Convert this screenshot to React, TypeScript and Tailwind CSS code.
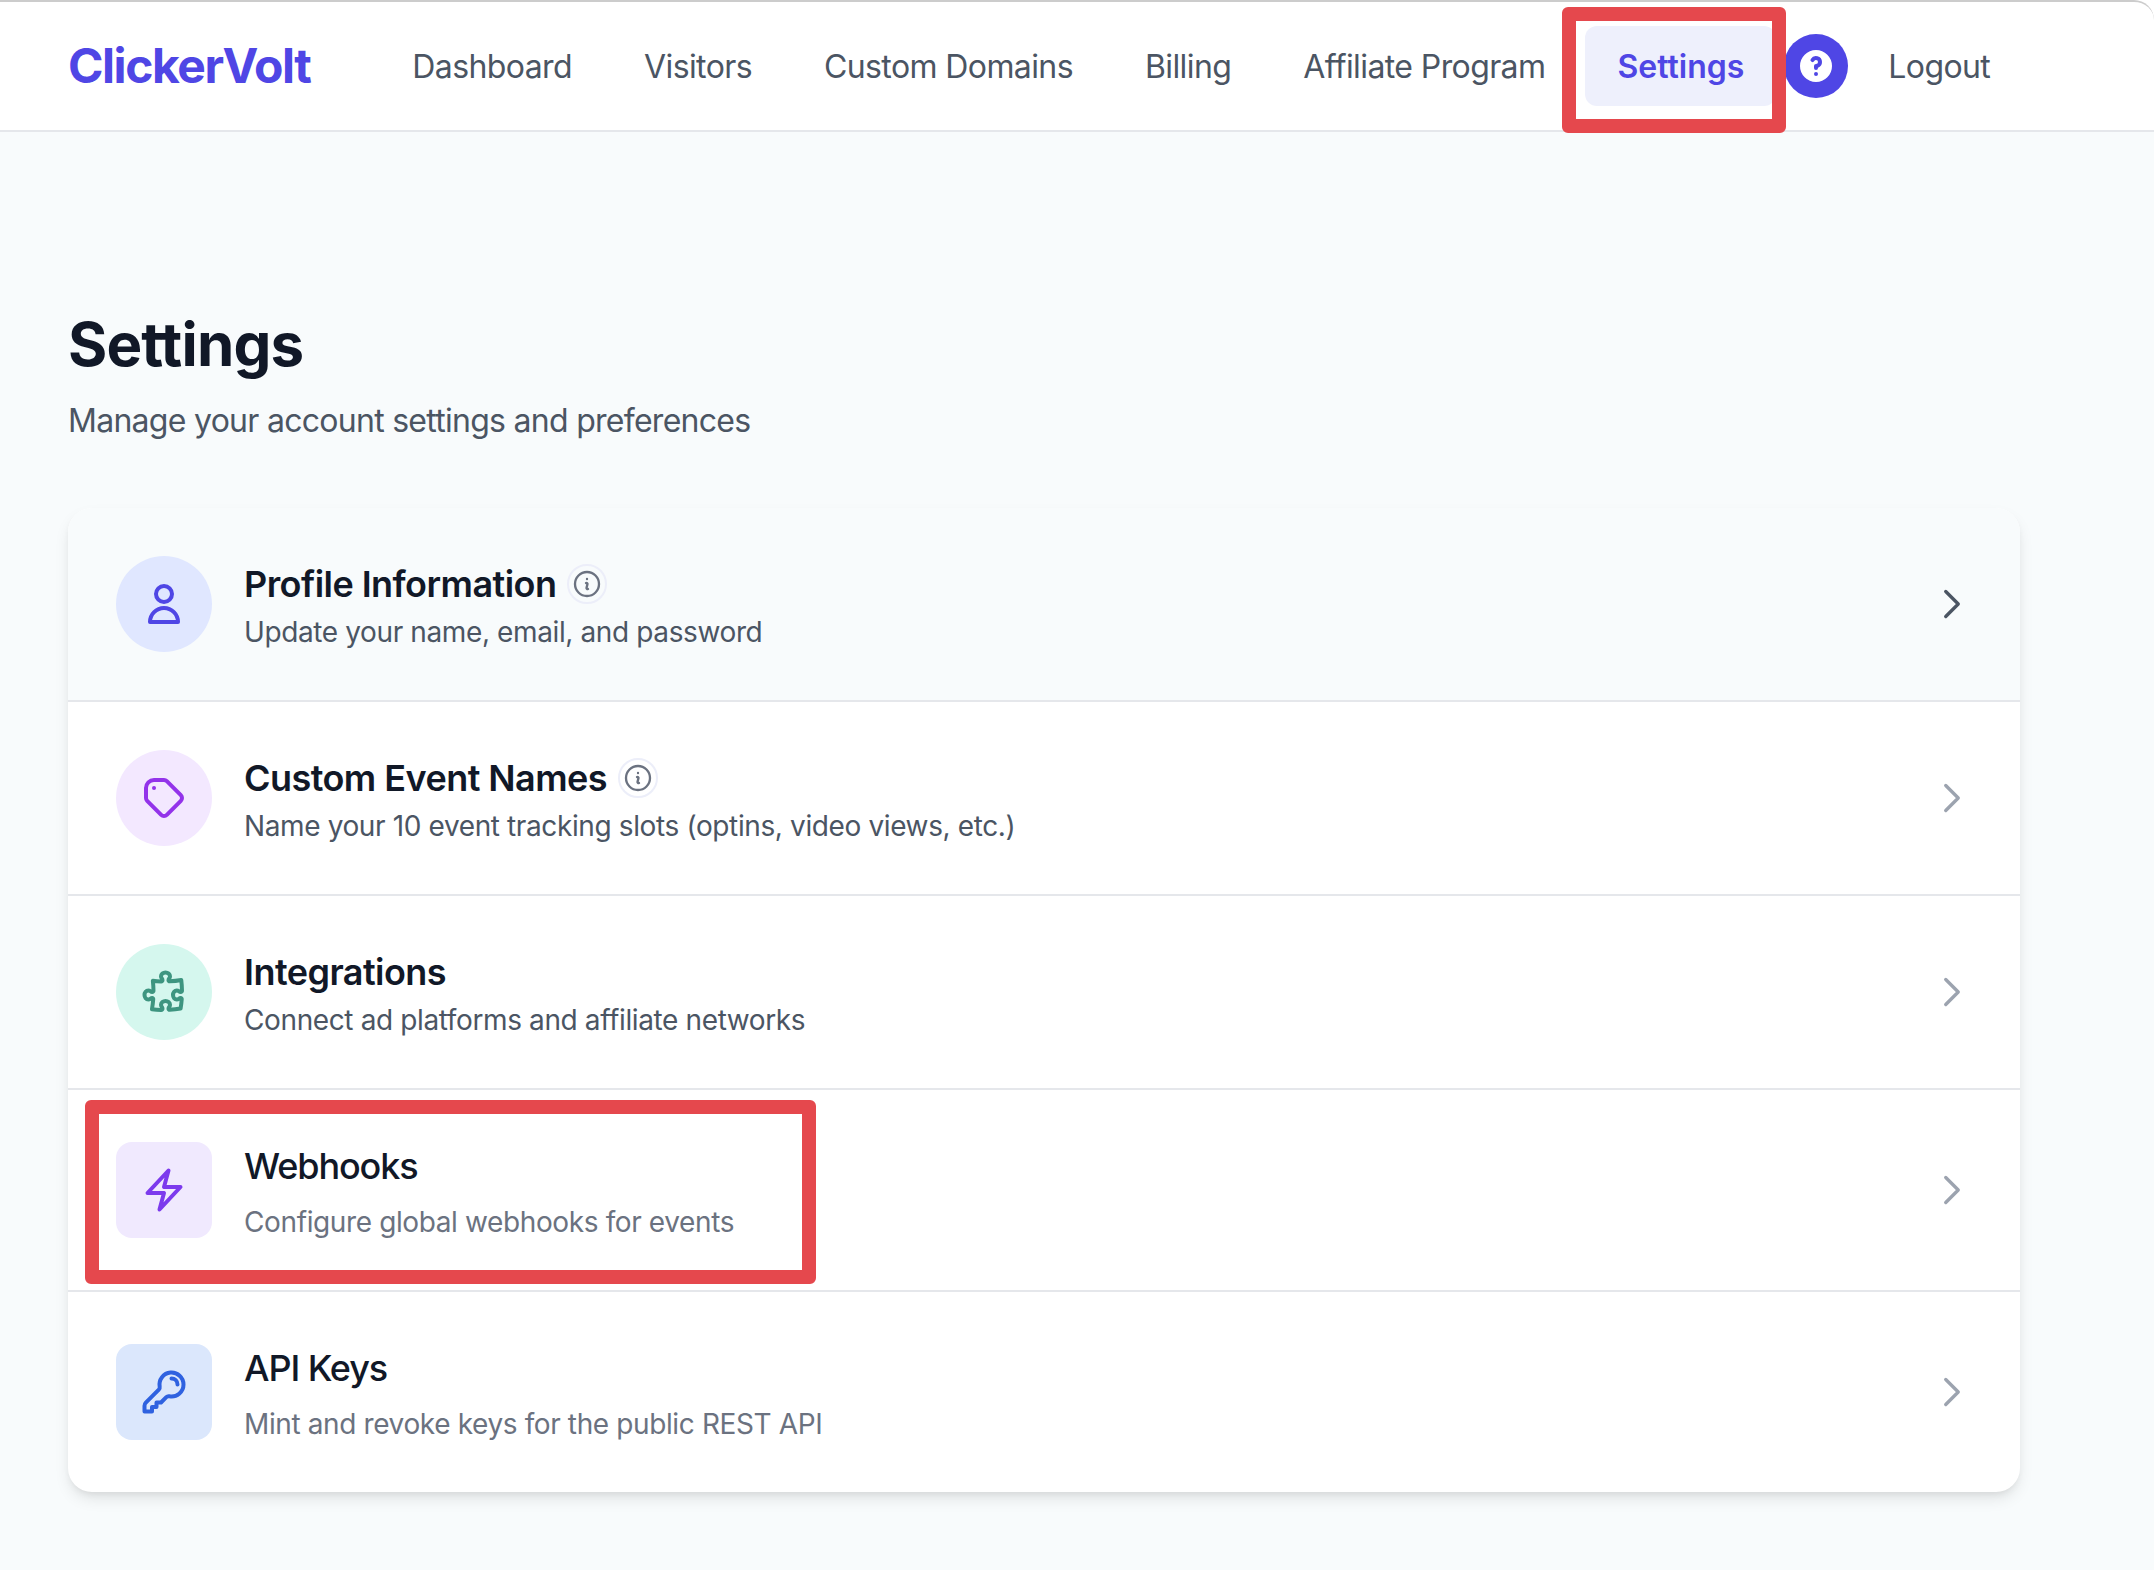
import type { ReactNode } from 'react';
import {
    HiOutlineBolt,
    HiOutlineInformationCircle,
    HiOutlineKey,
    HiOutlinePuzzlePiece,
} from 'react-icons/hi2';
import { HiQuestionMarkCircle } from 'react-icons/hi';

interface Setting {
    title: string;
    description: string;
    icon: ReactNode;
    iconBox: string;
    info?: boolean;
    active?: boolean;
    spaced?: boolean;
}

const navLinks = ['Dashboard', 'Visitors', 'Custom Domains', 'Billing', 'Affiliate Program'];

function UserIcon() {
    return (
        <svg className="h-12 w-12 text-[#4f46e5]" viewBox="0 0 24 24" fill="none" stroke="currentColor" strokeWidth={2} strokeLinecap="round" strokeLinejoin="round">
            <path d="M16 7a4 4 0 11-8 0 4 4 0 018 0zM12 14a7 7 0 00-7 7h14a7 7 0 00-7-7z" />
        </svg>
    );
}

function TagIcon() {
    return (
        <svg className="h-12 w-12 text-[#9333ea]" viewBox="0 0 24 24" fill="none" stroke="currentColor" strokeWidth={2} strokeLinecap="round" strokeLinejoin="round">
            <path d="M7 7h.01M7 3h5c.512 0 1.024.195 1.414.586l7 7a2 2 0 010 2.828l-7 7a2 2 0 01-2.828 0l-7-7A1.994 1.994 0 013 12V7a4 4 0 014-4z" />
        </svg>
    );
}

const settings: Setting[] = [
    {
        title: 'Profile Information',
        description: 'Update your name, email, and password',
        icon: <UserIcon />,
        iconBox: 'rounded-full bg-[#e0e7ff]',
        info: true,
        active: true,
    },
    {
        title: 'Custom Event Names',
        description: 'Name your 10 event tracking slots (optins, video views, etc.)',
        icon: <TagIcon />,
        iconBox: 'rounded-full bg-[#f3e8ff]',
        info: true,
    },
    {
        title: 'Integrations',
        description: 'Connect ad platforms and affiliate networks',
        icon: <HiOutlinePuzzlePiece strokeWidth={2} className="h-12 w-12 text-[#3e9580]" />,
        iconBox: 'rounded-full bg-[#d5f7ee]',
    },
    {
        title: 'Webhooks',
        description: 'Configure global webhooks for events',
        icon: <HiOutlineBolt strokeWidth={2} className="h-12 w-12 text-[#7c3aed]" />,
        iconBox: 'rounded-2xl bg-[#f0e9fe]',
        spaced: true,
    },
    {
        title: 'API Keys',
        description: 'Mint and revoke keys for the public REST API',
        icon: <HiOutlineKey strokeWidth={2} className="h-12 w-12 text-[#2f62e0]" />,
        iconBox: 'rounded-2xl bg-[#dbe7fc]',
        spaced: true,
    },
];

export default function App() {
    return (
        <div className="relative min-h-[1570px] bg-white font-[Inter,sans-serif]">
            <header className="flex h-[132px] items-center rounded-tr-[20px] border-t-2 border-b-2 border-t-[#cccccc] border-b-[#e5e7eb] bg-white pl-[68px]">
                <div className="text-5xl font-bold leading-none tracking-[-1.45px] text-[#4f46e5]">ClickerVolt</div>
                <nav className="ml-[70px] flex items-center gap-2 text-[32px] font-normal tracking-[-0.6px] text-[#4b5563]">
                    {navLinks.map((link) => (
                        <a key={link} className="px-8 pt-[17px] pb-[15px]">
                            {link}
                        </a>
                    ))}
                    <a className="rounded-xl bg-[#eef0fc] px-8 pt-[17px] pb-[15px] font-semibold tracking-normal text-[#4f46e5]">Settings</a>
                    <button className="flex h-16 w-16 items-center justify-center rounded-full bg-[#4f46e5] text-white">
                        <HiQuestionMarkCircle className="h-10 w-10" />
                    </button>
                    <a className="px-8 pt-[17px] pb-[15px]">Logout</a>
                </nav>
            </header>

            <main className="min-h-[1438px] bg-[#f8fbfc] px-[68px] pt-[176px]">
                <h1 className="text-6xl font-bold leading-[72px] tracking-[-0.85px] text-[#111827]">Settings</h1>
                <p className="mt-[17px] text-[32px] leading-[48px] tracking-[-0.72px] text-[#4b5563]">Manage your account settings and preferences</p>

                <div className="mt-[63px] w-[1952px] divide-y-2 divide-[#e5e7eb] rounded-3xl bg-white shadow-[0_8px_16px_-2px_rgba(0,0,0,0.1),0_4px_8px_-4px_rgba(0,0,0,0.1)]">
                    {settings.map((item) => (
                        <div
                            key={item.title}
                            className={`flex items-center justify-between p-12 first:rounded-t-3xl last:rounded-b-3xl ${item.active ? 'bg-[#f8fbfc]' : ''}`}
                        >
                            <div className="flex items-center gap-8">
                                <div className={`flex h-24 w-24 items-center justify-center ${item.iconBox}`}>{item.icon}</div>
                                <div>
                                    <div className="flex items-center gap-[11px]">
                                        <h3 className={`text-4xl leading-[56px] text-[#111827] ${item.spaced ? 'font-medium tracking-[-1.1px]' : 'font-semibold tracking-[-0.55px]'}`}>
                                            {item.title}
                                        </h3>
                                        {item.info && (
                                            <span className="flex h-10 w-10 items-center justify-center rounded-full border-2 border-[#eceef9] text-[#6b7280]">
                                                <HiOutlineInformationCircle strokeWidth={1.75} className="h-8 w-8" />
                                            </span>
                                        )}
                                    </div>
                                    <p className={`text-[28px] leading-10 tracking-[-0.38px] ${item.spaced ? 'mt-2 text-[#6b7280]' : 'text-[#4b5563]'}`}>
                                        {item.description}
                                    </p>
                                </div>
                            </div>
                            <svg
                                className={`h-10 w-10 ${item.active ? 'text-[#4b5563]' : 'text-[#9ca3af]'}`}
                                viewBox="0 0 24 24"
                                fill="none"
                                stroke="currentColor"
                                strokeWidth={2}
                                strokeLinecap="round"
                                strokeLinejoin="round"
                            >
                                <path d="M8.25 4.5l7.5 7.5-7.5 7.5" />
                            </svg>
                        </div>
                    ))}
                </div>
            </main>

            {/* red annotation boxes drawn over the page */}
            <div className="absolute left-[1562px] top-[7px] h-[126px] w-[224px] rounded-md border-[14px] border-[#e5484d]" />
            <div className="absolute left-[85px] top-[1100px] h-[184px] w-[731px] rounded-md border-[14px] border-[#e5484d]" />
        </div>
    );
}
